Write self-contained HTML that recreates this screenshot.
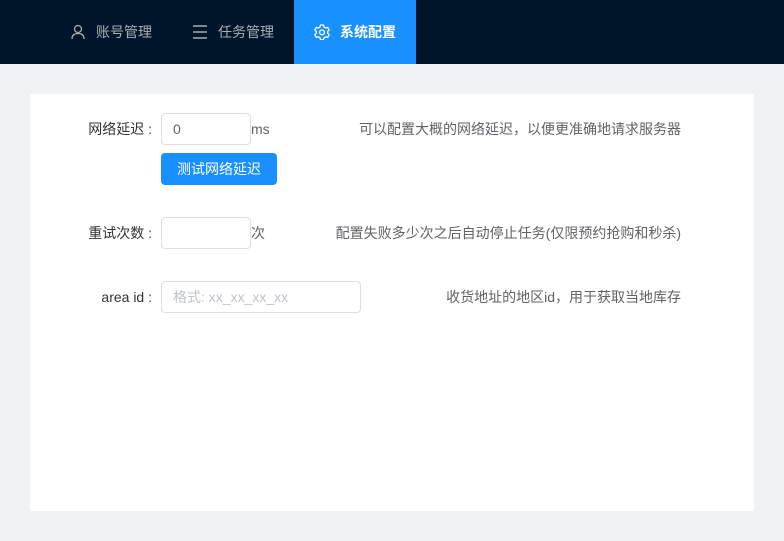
<!DOCTYPE html>
<html><head><meta charset="utf-8"><style>
*{box-sizing:border-box;margin:0;padding:0}
body{width:784px;height:541px;background:#f0f2f5;font-family:"Liberation Sans","Noto Sans CJK SC",sans-serif;font-size:14px;color:#606266;position:relative;overflow:hidden}
.nav{position:absolute;left:0;top:0;width:784px;height:64px;background:#001529}
.item{position:absolute;top:0;height:64px;line-height:64px;color:rgba(255,255,255,.65);font-size:14px}
.item svg{position:absolute;top:24px}
.item span{position:absolute;white-space:nowrap}
.active{background:#1890ff;color:#fff}
.card{position:absolute;left:30px;top:94px;width:724px;height:417px;background:#fff}
.abs{position:absolute;white-space:nowrap;line-height:18px}
.r{right:103px}
.lbl{color:#333;text-align:right;right:632px}
.inp{position:absolute;border:1px solid #dcdfe6;border-radius:4px;height:32px;background:#fff;line-height:30px;padding-left:11px}
.btn{position:absolute;left:161px;top:153px;width:116px;height:32px;background:#1890ff;border-radius:4px;color:#fff;text-align:center;line-height:32px;font-size:14px}
</style></head><body>
<div class="card"></div>
<div class="nav">
 <div class="item" style="left:50px;width:120px">
  <svg style="left:20px" width="16" height="16" viewBox="0 0 16 16" fill="none" stroke="#a6adb4" stroke-width="1.3"><circle cx="8" cy="5" r="3.5"/><path d="M2 15c0-4 2.5-5.5 6-5.5s6 1.5 6 5.5"/></svg>
  <span style="left:46px">账号管理</span></div>
 <div class="item" style="left:172px;width:120px">
  <svg style="left:20px" width="16" height="16" viewBox="0 0 16 16" stroke="#a6adb4" stroke-width="1.4"><path d="M1 2h14M1 8h14M1 14h14"/></svg>
  <span style="left:46px">任务管理</span></div>
 <div class="item active" style="left:294px;width:122px">
  <svg style="left:20px" width="16" height="16" viewBox="0 0 16 16" fill="none" stroke="#fff" stroke-width="1.3"><path d="M6.5 1h3l.5 2 1.7 1 2-.6 1.5 2.6-1.5 1.4v2l1.5 1.4-1.5 2.6-2-.6-1.7 1-.5 2h-3l-.5-2-1.7-1-2 .6L.8 10.8 2.3 9.4v-2L.8 6l1.5-2.6 2 .6L6 3z"/><circle cx="8" cy="8.4" r="2.4"/></svg>
  <span style="left:46px;font-weight:bold">系统配置</span></div>
</div>
<div class="abs lbl" style="top:120px">网络延迟&nbsp;:</div>
<div class="inp" style="left:161px;top:113px;width:90px;color:#606266">0</div>
<div class="abs" style="left:251px;top:120px">ms</div>
<div class="abs r" style="top:120px">可以配置大概的网络延迟，以便更准确地请求服务器</div>
<div class="btn">测试网络延迟</div>
<div class="abs lbl" style="top:224px">重试次数&nbsp;:</div>
<div class="inp" style="left:161px;top:217px;width:90px"></div>
<div class="abs" style="left:251px;top:224px">次</div>
<div class="abs r" style="top:224px">配置失败多少次之后自动停止任务(仅限预约抢购和秒杀)</div>
<div class="abs lbl" style="top:288px">area id&nbsp;:</div>
<div class="inp" style="left:161px;top:281px;width:200px;color:#c0c4cc;font-size:14px">格式: xx_xx_xx_xx</div>
<div class="abs r" style="top:288px">收货地址的地区id，用于获取当地库存</div>
</body></html>
